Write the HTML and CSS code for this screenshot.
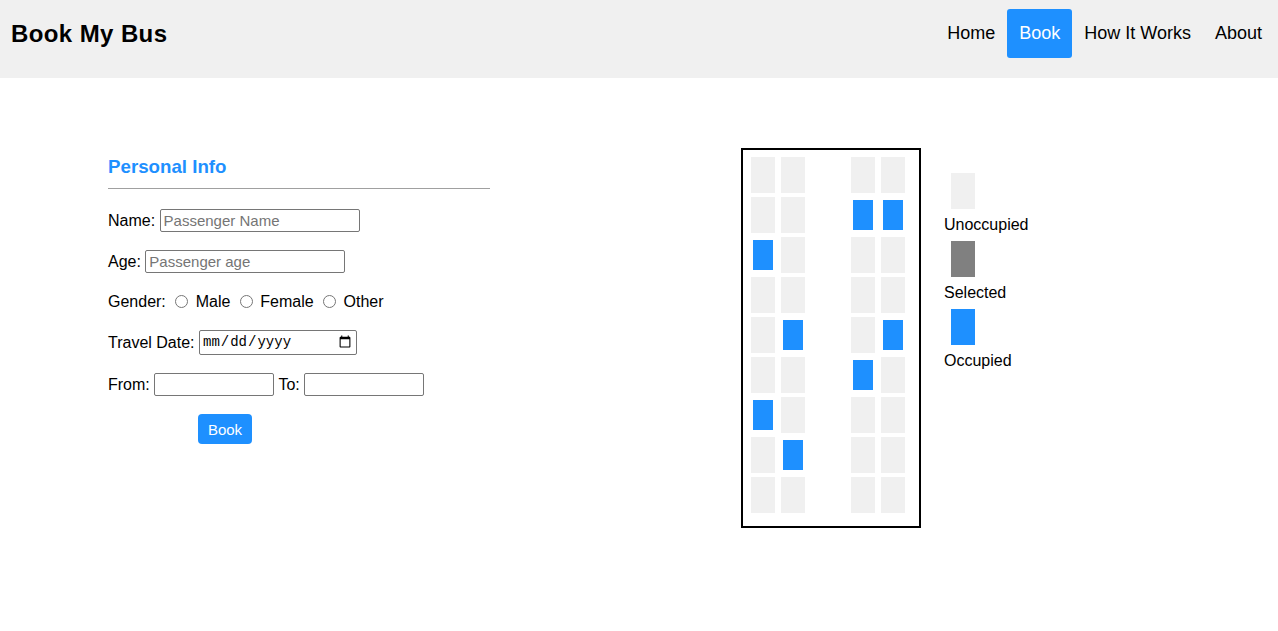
FILE: index.html
```html
<!DOCTYPE html>
<html lang="en">
<head>
<meta charset="utf-8">
<title>Book My Bus</title>
<link rel="stylesheet" href="styles.css">
</head>
<body>
<header class="topbar">
  <div class="brand">Book My Bus</div>
  <nav class="nav">
    <a class="nav-link" href="#">Home</a>
    <a class="nav-link active" href="#">Book</a>
    <a class="nav-link" href="#">How It Works</a>
    <a class="nav-link" href="#">About</a>
  </nav>
</header>
<main class="main">
  <section class="form-col">
    <h3 class="section-title">Personal Info</h3>
    <hr class="divider">
    <form class="form">
      <div class="row row-input"><span class="line">Name: <input class="text-input" type="text" placeholder="Passenger Name"></span></div>
      <div class="row row-input"><span class="line">Age: <input class="text-input" type="text" placeholder="Passenger age"></span></div>
      <div class="row row-radio"><span class="line">Gender: <input type="radio" name="g"> Male <input type="radio" name="g"> Female <input type="radio" name="g"> Other</span></div>
      <div class="row row-date"><span class="line">Travel Date: <input class="date-input" type="date"></span></div>
      <div class="row row-input"><span class="line">From: <input class="small-input" type="text"> To: <input class="small-input" type="text"></span></div>
      <div class="row-btn"><button class="book-btn" type="button">Book</button></div>
    </form>
  </section>
  <section class="bus">
    <div class="seat"></div><div class="seat"></div><div class="seat"></div><div class="seat"></div>
    <div class="seat"></div><div class="seat"></div><div class="seat occ"></div><div class="seat occ"></div>
    <div class="seat occ"></div><div class="seat"></div><div class="seat"></div><div class="seat"></div>
    <div class="seat"></div><div class="seat"></div><div class="seat"></div><div class="seat"></div>
    <div class="seat"></div><div class="seat occ"></div><div class="seat"></div><div class="seat occ"></div>
    <div class="seat"></div><div class="seat"></div><div class="seat occ"></div><div class="seat"></div>
    <div class="seat occ"></div><div class="seat"></div><div class="seat"></div><div class="seat"></div>
    <div class="seat"></div><div class="seat occ"></div><div class="seat"></div><div class="seat"></div>
    <div class="seat"></div><div class="seat"></div><div class="seat"></div><div class="seat"></div>
  </section>
  <section class="legend">
    <div class="legend-item"><div class="legend-box unocc"></div><div class="legend-text">Unoccupied</div></div>
    <div class="legend-item"><div class="legend-box sel"></div><div class="legend-text">Selected</div></div>
    <div class="legend-item"><div class="legend-box occb"></div><div class="legend-text">Occupied</div></div>
  </section>
</main>
</body>
</html>
```
FILE: styles.css
```css
* { box-sizing: border-box; }
body {
  margin: 0;
  font-family: "Liberation Sans", Arial, sans-serif;
  font-size: 16px;
  color: #000;
  background: #fff;
}
.topbar {
  height: 78px;
  background: #f0f0f0;
  display: flex;
  justify-content: space-between;
  align-items: flex-start;
  padding: 9px 4px 0 11px;
}
.brand {
  font-size: 24px;
  font-weight: bold;
  line-height: 49px;
  letter-spacing: 0.4px;
}
.nav { display: flex; }
.nav-link {
  display: block;
  font-size: 18px;
  line-height: 21px;
  padding: 14px 12px;
  color: #000;
  text-decoration: none;
  border-radius: 3px;
}
.nav-link.active {
  background: #1e90ff;
  color: #fff;
}
.main {
  display: flex;
  align-items: flex-start;
  padding-top: 70px;
}
.form-col {
  width: 382px;
  margin-left: 108px;
}
.section-title {
  margin: 8px 0 0;
  font-size: 18.72px;
  line-height: 22px;
  color: #1e90ff;
}
.divider {
  margin: 10px 0 20px;
  border: 0;
  border-top: 1px solid #a0a0a0;
  height: 0;
}
.form { margin: 0; }
.row {
  display: flex;
  align-items: center;
  margin-bottom: 18px;
}
.line { white-space: nowrap; padding-top: 1px; }
.row-input { height: 23px; }
.row-radio { height: 21px; }
.row-date { height: 25px; margin-bottom: 18px; }
.text-input, .small-input {
  font-family: "Liberation Sans", Arial, sans-serif;
  font-size: 15px;
  height: 23px;
  padding: 1px 3px;
  border: 1px solid #767676;
  border-radius: 2px;
  vertical-align: middle;
  margin-top: -2px;
}
.text-input { width: 200px; }
.small-input { width: 120px; }
.text-input::placeholder { color: #757575; }
input[type="radio"] {
  margin: 0 3px 0 5px;
  width: 13px;
  height: 13px;
  vertical-align: -1px;
}
.date-input {
  font-family: "Liberation Mono", monospace;
  font-size: 14px;
  width: 158px;
  height: 25px;
  padding: 1px 2px;
  border: 1px solid #767676;
  border-radius: 2px;
  vertical-align: middle;
  margin-top: -2px;
}
.row-btn { padding-left: 90px; }
.book-btn {
  width: 54px;
  height: 30px;
  background: #1e90ff;
  color: #fff;
  border: 0;
  border-radius: 4px;
  font-family: "Liberation Sans", Arial, sans-serif;
  font-size: 15px;
  padding: 0;
}
.bus {
  margin-left: 251px;
  width: 180px;
  height: 380px;
  border: 2px solid #000;
  padding: 7px 0 0 8px;
  display: grid;
  grid-template-columns: 24px 24px 34px 24px 24px;
  grid-auto-rows: 36px;
  column-gap: 6px;
  row-gap: 4px;
  align-content: start;
}
.seat {
  width: 24px;
  height: 36px;
  background: #f0f0f0;
}
.seat:nth-child(4n+3) { grid-column-start: 4; }
.seat.occ {
  width: 20px;
  height: 30px;
  margin: 3px 2px;
  background: #1e90ff;
}
.legend {
  margin-left: 23px;
  margin-top: 25px;
}
.legend-item { margin-bottom: 7px; }
.legend-box {
  width: 24px;
  height: 36px;
  margin: 0 0 6px 7px;
}
.legend-box.unocc { background: #f0f0f0; }
.legend-box.sel { background: #808080; }
.legend-box.occb { background: #1e90ff; }
.legend-text { line-height: 19px; }
```
